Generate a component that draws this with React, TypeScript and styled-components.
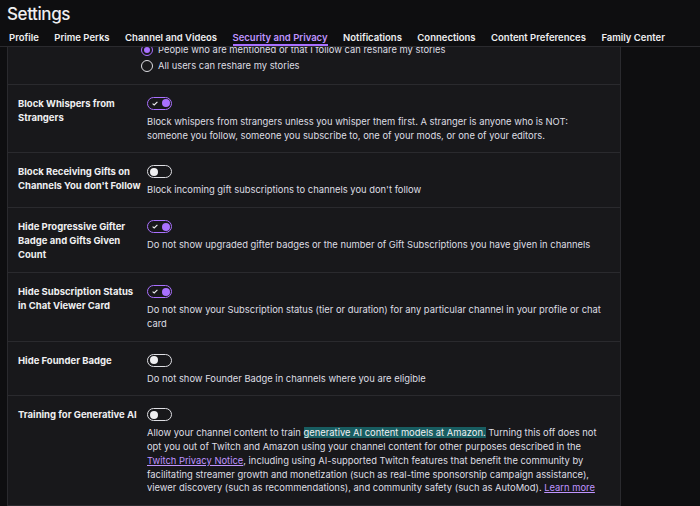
import { useLayoutEffect, useRef } from "react";
import styled, { createGlobalStyle } from "styled-components";

const GlobalStyle = createGlobalStyle`
  html, body {
    margin: 0;
    padding: 0;
    background: #0e0e10;
    color: #efeff1;
    font-family: Inter, "Noto Sans", sans-serif;
    overflow: hidden;
  }
`;

const Page = styled.div`
  display: flex;
  flex-direction: column;
  height: 506px;
  background: #0e0e10;
`;

const Title = styled.h1`
  margin: 0;
  padding: 1px 0 0 7px;
  font-size: 17px;
  line-height: 27px;
  font-weight: 500;
  letter-spacing: -0.4px;
  color: #efeff1;
`;

const TabBar = styled.div`
  display: flex;
  gap: 15.5px;
  padding: 0 9px;
  border-bottom: 1px solid #2a2a2e;
`;

const Tab = styled.div<{ $active?: boolean }>`
  padding-top: 3px;
  font-size: 9.5px;
  line-height: 13px;
  font-weight: 600;
  white-space: nowrap;
  color: ${(p) => (p.$active ? "#bf94ff" : "#efeff1")};
  border-bottom: 2px solid ${(p) => (p.$active ? "#a970ff" : "transparent")};
`;

const Scroller = styled.div`
  position: relative;
  flex: 1;
  overflow-y: auto;
  scrollbar-width: none;
`;

const Panel = styled.div`
  margin: 0 0 60px 7px;
  width: 614px;
  box-sizing: border-box;
  background: #18181b;
  border-left: 1px solid #2a2a2e;
  border-right: 1px solid #2a2a2e;
  border-bottom: 1px solid #2a2a2e;
`;

const Row = styled.div`
  display: flex;
  gap: 5px;
  padding: 12px 10px 10px;
  border-top: 1px solid #2a2a2e;
  &:first-child {
    border-top: none;
  }
`;

const Label = styled.div`
  flex: 0 0 124px;
  font-size: 9.5px;
  line-height: 14px;
  font-weight: 700;
  color: #efeff1;
`;

const Control = styled.div`
  flex: 1;
  display: flex;
  flex-direction: column;
  align-items: flex-start;
  gap: 5px;
`;

const Description = styled.div`
  font-size: 9.4px;
  line-height: 13.75px;
  color: #dedee3;
`;

const Track = styled.span<{ $on: boolean }>`
  display: flex;
  align-items: center;
  justify-content: ${(p) => (p.$on ? "space-between" : "flex-start")};
  box-sizing: border-box;
  width: 25px;
  height: 13px;
  padding: 0 1.5px 0 ${(p) => (p.$on ? "4px" : "1.5px")};
  border-radius: 7px;
  border: 1.5px solid ${(p) => (p.$on ? "#a970ff" : "#dedee3")};
  background: #18181b;
`;

const Knob = styled.span<{ $on: boolean }>`
  width: 8px;
  height: 8px;
  border-radius: 50%;
  background: ${(p) => (p.$on ? "#a970ff" : "#efeff1")};
`;

const Options = styled.div`
  display: flex;
  flex-direction: column;
  margin-left: -6px;
`;

const Option = styled.div`
  display: flex;
  align-items: center;
  gap: 5px;
  height: 16px;
  font-size: 9.4px;
  color: #dedee3;
`;

const Radio = styled.span<{ $checked: boolean }>`
  display: flex;
  align-items: center;
  justify-content: center;
  box-sizing: border-box;
  width: 12px;
  height: 12px;
  border-radius: 50%;
  border: 1.5px solid ${(p) => (p.$checked ? "#a970ff" : "#dedee3")};
  &::after {
    content: "";
    width: 6px;
    height: 6px;
    border-radius: 50%;
    background: ${(p) => (p.$checked ? "#a970ff" : "transparent")};
  }
`;

const Mark = styled.span`
  background: #185d61;
  color: #efeff1;
`;

const Link = styled.a`
  color: #bf94ff;
  text-decoration: underline;
`;

const tabs = [
  "Profile",
  "Prime Perks",
  "Channel and Videos",
  "Security and Privacy",
  "Notifications",
  "Connections",
  "Content Preferences",
  "Family Center",
];

type Setting = {
  id: string;
  label: string;
  on: boolean;
  description: React.ReactNode;
};

const settings: Setting[] = [
  {
    id: "whispers",
    label: "Block Whispers from Strangers",
    on: true,
    description:
      "Block whispers from strangers unless you whisper them first. A stranger is anyone who is NOT: someone you follow, someone you subscribe to, one of your mods, or one of your editors.",
  },
  {
    id: "gifts",
    label: "Block Receiving Gifts on Channels You don't Follow",
    on: false,
    description: "Block incoming gift subscriptions to channels you don't follow",
  },
  {
    id: "gifter",
    label: "Hide Progressive Gifter Badge and Gifts Given Count",
    on: true,
    description:
      "Do not show upgraded gifter badges or the number of Gift Subscriptions you have given in channels",
  },
  {
    id: "substatus",
    label: "Hide Subscription Status in Chat Viewer Card",
    on: true,
    description:
      "Do not show your Subscription status (tier or duration) for any particular channel in your profile or chat card",
  },
  {
    id: "founder",
    label: "Hide Founder Badge",
    on: false,
    description: "Do not show Founder Badge in channels where you are eligible",
  },
  {
    id: "genai",
    label: "Training for Generative AI",
    on: false,
    description: (
      <>
        Allow your channel content to train <Mark>generative AI content models at Amazon.</Mark> Turning
        this off does not opt you out of Twitch and Amazon using your channel content for other purposes
        described in the <Link href="#">Twitch Privacy Notice</Link>, including using AI-supported Twitch
        features that benefit the community by facilitating streamer growth and monetization (such as
        real-time sponsorship campaign assistance), viewer discovery (such as recommendations), and
        community safety (such as AutoMod). <Link href="#">Learn more</Link>
      </>
    ),
  },
];

const storyOptions = [
  { label: "Only people I follow can reshare my stories", checked: false },
  { label: "People who are mentioned or that I follow can reshare my stories", checked: true },
  { label: "All users can reshare my stories", checked: false },
];

function Toggle({ on }: { on: boolean }) {
  return (
    <Track $on={on}>
      {on && (
        <svg width="6" height="5" viewBox="0 0 6 5">
          <path d="M0.6 2.6 L2.2 4 L5.4 0.8" fill="none" stroke="#efeff1" strokeWidth="1.1" />
        </svg>
      )}
      <Knob $on={on} />
    </Track>
  );
}

function App() {
  const scrollerRef = useRef<HTMLDivElement>(null);
  const anchorRef = useRef<HTMLDivElement>(null);

  useLayoutEffect(() => {
    if (scrollerRef.current && anchorRef.current) {
      scrollerRef.current.scrollTop = anchorRef.current.offsetTop + 5;
    }
  }, []);

  return (
    <>
      <GlobalStyle />
      <Page>
        <Title>Settings</Title>
        <TabBar>
          {tabs.map((tab) => (
            <Tab key={tab} $active={tab === "Security and Privacy"}>
              {tab}
            </Tab>
          ))}
        </TabBar>
        <Scroller ref={scrollerRef}>
          <Panel>
            <Row>
              <Label>Allow Others to Reshare Your Stories</Label>
              <Control>
                <Toggle on />
                <Description>Choose who can share your stories with their followers</Description>
                <Options>
                  {storyOptions.map((opt) => (
                    <Option key={opt.label} ref={opt.checked ? anchorRef : undefined}>
                      <Radio $checked={opt.checked} />
                      {opt.label}
                    </Option>
                  ))}
                </Options>
              </Control>
            </Row>
            {settings.map((s) => (
              <Row key={s.id}>
                <Label>{s.label}</Label>
                <Control>
                  <Toggle on={s.on} />
                  <Description>{s.description}</Description>
                </Control>
              </Row>
            ))}
          </Panel>
        </Scroller>
      </Page>
    </>
  );
}

export default App;
